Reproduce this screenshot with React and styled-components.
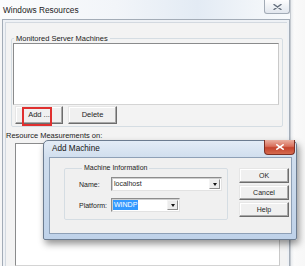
import React from 'react';
import styled, { createGlobalStyle } from 'styled-components';

const GlobalStyle = createGlobalStyle`
  html, body {
    margin: 0;
    padding: 0;
  }
  body {
    width: 305px;
    height: 266px;
    overflow: hidden;
    background: #f5f5f5;
    font-family: "Liberation Sans", Arial, sans-serif;
    color: #1f1f1f;
  }
  * {
    box-sizing: border-box;
  }
`;

const Screen = styled.div`
  position: relative;
  display: flex;
  width: 305px;
  height: 266px;
  overflow: hidden;
  background: #f6f6f6;
`;

const MainWindow = styled.div`
  display: flex;
  flex-direction: column;
  flex-shrink: 0;
  width: 290px;
  height: 100%;
`;

const TitleBar = styled.div`
  display: flex;
  align-items: flex-start;
  height: 19px;
  padding-left: 3px;
  background: linear-gradient(
    90deg,
    #fbfcfd 0%,
    #f2f5f9 40%,
    #e3ebf4 68%,
    #f1f5f9 88%,
    #f8fafc 100%
  );
`;

const Title = styled.span`
  margin-top: 5px;
  font-size: 8.3px;
  line-height: 10px;
  color: #1b1b1b;
`;

const CloseButton = styled.div`
  display: flex;
  align-items: center;
  justify-content: center;
  width: 26px;
  height: 14px;
  margin-left: auto;
  border: 1px solid #a2abb6;
  border-top: none;
  border-radius: 0 0 3px 3px;
  background: linear-gradient(180deg, #fdfdfe 0%, #eef1f5 50%, #e2e7ee 100%);
`;

const Frame = styled.div`
  display: flex;
  flex: 1;
  margin-left: 2px;
  padding: 2px 2px 0 2px;
  border: 1px solid #a3acb7;
  border-bottom: none;
  background: #eef1f5;
`;

const Client = styled.div`
  display: flex;
  flex-direction: column;
  flex: 1;
  padding: 11px 4px 0 5px;
  border-top: 1px solid #d3d9e0;
  border-left: 1px solid #d3d9e0;
  background: #f3f3f3;
`;

const GroupBox = styled.fieldset`
  margin: 0;
  min-width: 0;
  width: ${p => (p.w ? `${p.w}px` : 'auto')};
  padding: ${p => p.pad};
  border: 1px solid #d5dde3;
  border-radius: 2px;
`;

const GroupLegend = styled.legend`
  margin-left: ${p => p.offset}px;
  padding: 0 2px;
  font-size: ${p => p.size}px;
  line-height: ${p => p.lh}px;
  color: #222;
`;

const ListBox = styled.div`
  flex: ${p => (p.grow ? 1 : 'none')};
  height: ${p => (p.grow ? 'auto' : `${p.h}px`)};
  margin: ${p => p.m || 0};
  border: 1px solid;
  border-color: #8a8b8c #c9c9c9 #d4d4d4 #8a8b8c;
  background: #fff;
`;

const ButtonRow = styled.div`
  display: flex;
  gap: 5px;
  margin: 1px 0 0 2px;
`;

const PushButton = styled.div`
  position: relative;
  display: flex;
  align-items: center;
  justify-content: center;
  width: ${p => p.w}px;
  height: ${p => p.h}px;
  border: 1px solid;
  border-color: #e6e6e6 #6d6d6d #6d6d6d #e6e6e6;
  box-shadow: inset -1px -1px #a8a8a8, inset 1px 1px #ffffff;
  background: #f0f0f0;
  font-size: ${p => p.size}px;
  line-height: 1;
  color: #1f1f1f;
`;

/* red annotation frame drawn over the Add button */
const RedMark = styled.span`
  position: absolute;
  left: 6px;
  top: 0;
  width: 30px;
  height: 19px;
  border: 2px solid #e0302f;
  pointer-events: none;
`;

const SectionLabel = styled.div`
  margin: 4px 0 0 -5px;
  font-size: 7.5px;
  line-height: 9px;
  white-space: nowrap;
  color: #222;
`;

const RightStrip = styled.div`
  flex: 1;
  border-left: 1px solid #c4c9cf;
  background: linear-gradient(90deg, #e9ecef 0px, #fafafa 3px, #f7f7f7 100%);
`;

/* Add Machine dialog */

const Dialog = styled.div`
  position: absolute;
  left: 43px;
  top: 140px;
  display: flex;
  flex-direction: column;
  width: 254px;
  height: 100px;
  border: 1px solid #6c7c90;
  border-radius: 5px 5px 2px 2px;
  background: linear-gradient(180deg, #e3ecf6 0%, #cfdded 18%, #bfd2e9 100%);
  box-shadow: 2px 4px 7px rgba(0, 0, 0, 0.42);
`;

const DialogTitleBar = styled.div`
  display: flex;
  align-items: flex-start;
  height: 16px;
  padding-left: 8px;
`;

const DialogTitle = styled.span`
  margin-top: 3px;
  font-size: 8.2px;
  line-height: 10px;
  color: #151515;
`;

const DialogClose = styled.div`
  display: flex;
  align-items: center;
  justify-content: center;
  width: 31px;
  height: 15px;
  margin: -1px 1px 0 auto;
  border: 1px solid #7e3024;
  border-top: none;
  border-radius: 0 0 4px 4px;
  background: linear-gradient(
    180deg,
    #eab0a1 0%,
    #d9705c 45%,
    #c4442d 55%,
    #d56a4f 100%
  );
`;

const DialogClient = styled.div`
  display: flex;
  align-items: flex-start;
  flex: 1;
  margin: 0 4px 5px 5px;
  padding: 6px 0 0 14px;
  border: 1px solid #8ea0b6;
  background: #f0f0f0;
`;

const FieldGrid = styled.div`
  display: grid;
  grid-template-columns: 32px auto;
  row-gap: 7px;
  align-items: center;
`;

const FieldLabel = styled.span`
  font-size: 7px;
  line-height: 9px;
  color: #222;
`;

const Combo = styled.div`
  display: flex;
  align-items: center;
  justify-content: space-between;
  width: ${p => p.w}px;
  height: 14px;
  padding: 0 1px;
  border: 1px solid;
  border-color: #8d8d8d #e2e2e2 #e2e2e2 #8d8d8d;
  box-shadow: inset 1px 1px #cfcfcf;
  background: #fff;
`;

const ComboText = styled.span`
  padding: 0 1px;
  font-size: 7px;
  line-height: 10px;
  color: ${p => (p.selected ? '#fff' : '#1f1f1f')};
  background: ${p => (p.selected ? '#3399ff' : 'transparent')};
`;

const ArrowButton = styled.span`
  display: flex;
  align-items: center;
  justify-content: center;
  width: 11px;
  height: 10px;
  border: 1px solid;
  border-color: #f4f4f4 #8c8c8c #8c8c8c #f4f4f4;
  background: #ececec;

  &::after {
    content: '';
    border-left: 2.5px solid transparent;
    border-right: 2.5px solid transparent;
    border-top: 3px solid #111;
  }
`;

const ButtonColumn = styled.div`
  display: flex;
  flex-direction: column;
  gap: 2px;
  margin: 4px 0 0 11px;
`;

function XGlyph({ color, width = 9, height = 6, stroke = 1.4 }) {
  return (
    <svg width={width} height={height} viewBox="0 0 9 6">
      <path
        d="M1 0.5 L8 5.5 M8 0.5 L1 5.5"
        stroke={color}
        strokeWidth={stroke}
        strokeLinecap="round"
        fill="none"
      />
    </svg>
  );
}

export default function App() {
  return (
    <>
      <GlobalStyle />
      <Screen>
        <MainWindow>
          <TitleBar>
            <Title>Windows Resources</Title>
            <CloseButton>
              <XGlyph color="#66707e" />
            </CloseButton>
          </TitleBar>
          <Frame>
            <Client>
              <GroupBox pad="0 3px 2px 1px">
                <GroupLegend offset={1} size={7.5} lh={9}>
                  Monitored Server Machines
                </GroupLegend>
                <ListBox h={62} />
                <ButtonRow>
                  <PushButton w={48} h={18} size={7.5}>
                    Add ...
                    <RedMark />
                  </PushButton>
                  <PushButton w={49} h={18} size={7.5}>
                    Delete
                  </PushButton>
                </ButtonRow>
              </GroupBox>
              <SectionLabel>Resource Measurements on:</SectionLabel>
              <ListBox grow m="3px 3px 0 4px" />
            </Client>
          </Frame>
        </MainWindow>
        <RightStrip />

        <Dialog>
          <DialogTitleBar>
            <DialogTitle>Add Machine</DialogTitle>
            <DialogClose>
              <XGlyph color="#ffffff" width={8} height={6} stroke={1.8} />
            </DialogClose>
          </DialogTitleBar>
          <DialogClient>
            <GroupBox pad="5px 4px 7px 14px" w={164}>
              <GroupLegend offset={3} size={7} lh={8}>
                Machine Information
              </GroupLegend>
              <FieldGrid>
                <FieldLabel>Name:</FieldLabel>
                <Combo w={111}>
                  <ComboText>localhost</ComboText>
                  <ArrowButton />
                </Combo>
                <FieldLabel>Platform:</FieldLabel>
                <Combo w={69}>
                  <ComboText selected>WINDP</ComboText>
                  <ArrowButton />
                </Combo>
              </FieldGrid>
            </GroupBox>
            <ButtonColumn>
              <PushButton w={50} h={15} size={7}>
                OK
              </PushButton>
              <PushButton w={50} h={15} size={7}>
                Cancel
              </PushButton>
              <PushButton w={50} h={15} size={7}>
                Help
              </PushButton>
            </ButtonColumn>
          </DialogClient>
        </Dialog>
      </Screen>
    </>
  );
}
